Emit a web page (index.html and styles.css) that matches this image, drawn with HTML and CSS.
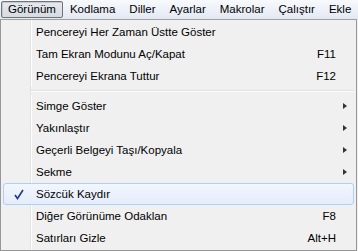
FILE: index.html
```html
<!DOCTYPE html>
<html lang="tr">
<head>
    <meta charset="UTF-8">
    <title>Görünüm</title>
    <link rel="stylesheet" href="styles.css">
</head>
<body>
    <div class="menubar">
        <span class="bar-item open">Görünüm</span>
        <span class="bar-item">Kodlama</span>
        <span class="bar-item">Diller</span>
        <span class="bar-item">Ayarlar</span>
        <span class="bar-item">Makrolar</span>
        <span class="bar-item">Çalıştır</span>
        <span class="bar-item">Ekle</span>
    </div>

    <div class="menu">
        <div class="menu-item"><span class="label">Pencereyi Her Zaman Üstte Göster</span></div>
        <div class="menu-item"><span class="label">Tam Ekran Modunu Aç/Kapat</span><span class="key">F11</span></div>
        <div class="menu-item"><span class="label">Pencereyi Ekrana Tuttur</span><span class="key">F12</span></div>
        <div class="separator"></div>
        <div class="menu-item sub"><span class="label">Simge Göster</span><span class="arrow"></span></div>
        <div class="menu-item sub"><span class="label">Yakınlaştır</span><span class="arrow"></span></div>
        <div class="menu-item sub"><span class="label">Geçerli Belgeyi Taşı/Kopyala</span><span class="arrow"></span></div>
        <div class="menu-item sub"><span class="label">Sekme</span><span class="arrow"></span></div>
        <div class="menu-item checked hover">
            <svg class="check" width="10" height="11" viewBox="0 0 10 11">
                <path d="M1 6 L3.5 9.5 L9 1" fill="none" stroke="#1f3597" stroke-width="1.6"/>
            </svg>
            <span class="label">Sözcük Kaydır</span>
        </div>
        <div class="menu-item"><span class="label">Diğer Görünüme Odaklan</span><span class="key">F8</span></div>
        <div class="menu-item"><span class="label">Satırları Gizle</span><span class="key">Alt+H</span></div>
    </div>
</body>
</html>
```

FILE: styles.css
```css
* {
    box-sizing: border-box;
    margin: 0;
    padding: 0;
}

body {
    width: 358px;
    height: 251px;
    overflow: hidden;
    font-family: "Liberation Sans", Arial, sans-serif;
    font-size: 11.5px;
    color: #000;
    background: #f0f0f0;
}

/* menu bar */
.menubar {
    display: flex;
    height: 19px;
    padding: 1px 0 0 1px;
    background: linear-gradient(#f7f9fd, #e3e9f3);
    white-space: nowrap;
}

.bar-item {
    height: 17px;
    line-height: 15px;
    padding: 0 6px;
    border: 1px solid transparent;
}

.bar-item.open {
    border-color: #6f7479;
    border-radius: 2px;
    background: linear-gradient(#e6e9ee, #d6dbe2);
    box-shadow: inset 1px 1px 0 #c4c9cf;
}

/* dropdown */
.menu {
    position: relative;
    width: 357px;
    padding: 1px 2px;
    border: 1px solid #979797;
    border-top-color: #a0a0a0;
    background: linear-gradient(to right, #f0f0f0 29px, #e2e3e3 29px, #e2e3e3 30px, #fff 30px, #fff 31px, #f0f0f0 31px);
}

.menu-item {
    position: relative;
    display: flex;
    align-items: center;
    height: 22px;
    padding: 0 17px 0 32px;
    border: 1px solid transparent;
    border-radius: 3px;
    white-space: nowrap;
}

.menu-item .key {
    margin-left: auto;
}

.menu-item .arrow {
    position: absolute;
    right: 6px;
    top: 7px;
    width: 0;
    height: 0;
    border-top: 3.5px solid transparent;
    border-bottom: 3.5px solid transparent;
    border-left: 4px solid #333;
}

.menu-item.hover {
    border-color: #aecff7;
    background: linear-gradient(#f2f7fd, #e4edfb);
}

.check {
    position: absolute;
    left: 10px;
    top: 5px;
}

.separator {
    height: 8px;
    margin-left: 28px;
    background: linear-gradient(#f0f0f0 3px, #e0e0e0 3px, #e0e0e0 4px, #fff 4px, #fff 5px, #f0f0f0 5px);
}
```
